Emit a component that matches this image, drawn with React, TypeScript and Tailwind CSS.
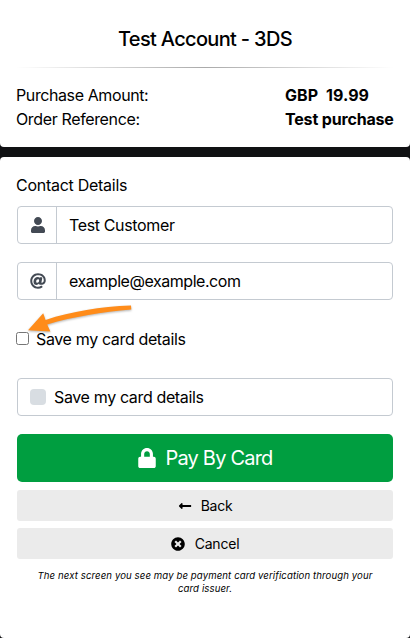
import React from "react";
import { FaUser, FaAt, FaLock, FaLongArrowAltLeft, FaTimesCircle } from "react-icons/fa";

function Field({ icon, children }: { icon: React.ReactNode; children: React.ReactNode }) {
  return (
    <div className="mx-px flex h-[38px] overflow-hidden rounded-[4px] border border-[#c4cad1]">
      <span className="flex w-[39px] items-center justify-center border-r border-[#c4cad1] pl-px text-base text-[#434a54]">
        {icon}
      </span>
      <span className="pl-3 leading-[36px]">{children}</span>
    </div>
  );
}

function Pointer() {
  return (
    <svg
      className="absolute top-[300px] left-[20px] drop-shadow-[0_1px_1px_rgba(0,0,0,0.3)]"
      width="120"
      height="40"
      viewBox="20 300 120 40"
      fill="#ff8c1a"
    >
      <path d="M28 330.3L43.2 313.2L45.6 319.9C72 311.5 100 306.8 131 305.6L131.3 309.6C102 312 74 316.8 47.2 324.4L50.4 331.6Z" />
    </svg>
  );
}

export default function App() {
  return (
    <main className="relative flex h-[638px] w-[410px] flex-col gap-[10px] overflow-hidden bg-[#101113] font-['Inter',sans-serif] text-base leading-6 text-black">
      <section className="h-[147px] rounded-b-[4px] bg-white px-4 pt-[27px]">
        <h1 className="text-center text-[20px] leading-6 font-medium tracking-[-0.67px]">Test Account - 3DS</h1>
        <div className="mt-4 h-px bg-linear-to-r from-transparent via-[#aaaaaa] to-transparent" />
        <dl className="mt-[15px] grid grid-cols-[269px_1fr] whitespace-nowrap">
          <dt className="tracking-[-0.4px]">Purchase Amount:</dt>
          <dd className="font-bold tracking-[0.08px] whitespace-pre">GBP  19.99</dd>
          <dt className="tracking-[-0.36px]">Order Reference:</dt>
          <dd className="font-bold tracking-[-0.17px]">Test purchase</dd>
        </dl>
      </section>

      <section className="h-[481px] rounded-[4px] bg-white px-4 pt-4 tracking-[-0.36px]">
        <h2 className="mb-[9px] leading-6 tracking-[-0.27px]">Contact Details</h2>
        <Field icon={<FaUser />}>Test Customer</Field>
        <div className="h-[18px]" />
        <Field icon={<FaAt />}>
          <span className="tracking-[-0.46px]">example@example.com</span>
        </Field>

        <label className="mt-[27px] flex h-6 items-center">
          <span className="relative -top-px mr-[7px] h-[13px] w-[13px] rounded-[2.5px] border border-[#767676] bg-white" />
          <span>Save my card details</span>
        </label>

        <label className="mx-px mt-[27px] flex h-[38px] items-center rounded-[4px] border border-[#c4cad1] pl-3">
          <span className="mr-2 h-4 w-4 rounded-[4px] bg-[#d8dde2]" />
          <span>Save my card details</span>
        </label>

        <button className="mx-px mt-[18px] flex h-12 w-[376px] items-center justify-center rounded-[5px] bg-[#009e40] text-[20px] tracking-[-0.8px] text-white">
          <FaLock className="mr-[8px]" />
          <span>Pay By Card</span>
        </button>
        <button className="mx-px mt-2 flex h-[31px] w-[376px] items-center justify-center rounded-[3px] bg-[#ebebeb] text-[14px] tracking-[-0.25px]">
          <FaLongArrowAltLeft className="mr-[9px]" />
          <span>Back</span>
        </button>
        <button className="mx-px mt-[7px] flex h-[31px] w-[376px] items-center justify-center rounded-[3px] bg-[#ebebeb] text-[14px] tracking-[-0.2px]">
          <FaTimesCircle className="mr-[10px]" />
          <span>Cancel</span>
        </button>
        <p className="mt-[10px] text-center text-[9.6px] leading-[13px] tracking-[0.1px] italic">
          The next screen you see may be payment card verification through your
          <br />
          card issuer.
        </p>
      </section>
      <Pointer />
    </main>
  );
}
